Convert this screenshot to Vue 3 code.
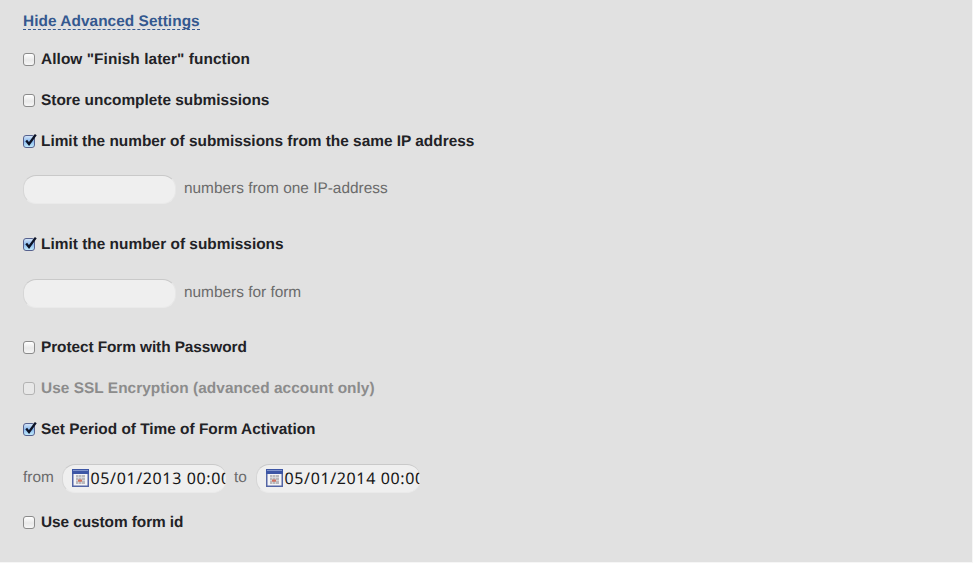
<template>
  <div class="settings-panel">
    <div class="panel-header">
      <a class="toggle-link">Hide Advanced Settings</a>
    </div>

    <template v-for="item in options" :key="item.id">
      <label class="option" :class="{ disabled: item.disabled }">
        <span class="checkbox" :class="{ checked: item.checked }" @click="toggle(item)">
          <svg v-if="item.checked" class="tick" width="15" height="16" viewBox="0 0 15 16">
            <path d="M3.2 7.6 L6 11 L12.8 1.6" fill="none" stroke="#0b1226" stroke-width="2.3" />
          </svg>
        </span>
        <span class="option-label" :style="{ letterSpacing: item.spacing + 'px' }">{{ item.label }}</span>
      </label>

      <div v-if="item.hint && item.checked" class="field-row" :class="item.id">
        <input v-model="item.value" class="field" type="text" />
        <span class="hint">{{ item.hint }}</span>
      </div>

      <div v-if="item.period && item.checked" class="period-row">
        <template v-for="date in item.period" :key="date.name">
          <span class="hint" :class="date.name">{{ date.name }}</span>
          <div class="date-field">
            <svg class="calendar" width="17" height="18" viewBox="0 0 17 18">
              <rect x="0.75" y="0.75" width="15.5" height="16.5" fill="#f4f4f6" stroke="#5365a5" stroke-width="1.5" />
              <rect x="0" y="0" width="17" height="5" fill="#3d56a5" />
              <rect x="1" y="1" width="15" height="1" fill="#8295cc" />
              <rect x="4" y="6" width="9" height="9" fill="#b9b9bd" />
              <path d="M4 8.5H13M4 11.5H13M6.5 6V15M9.5 6V15" stroke="#e0e0e2" stroke-width="0.7" />
              <rect x="6" y="10.5" width="4" height="2.2" fill="#d2705f" />
            </svg>
            <span class="date-value">{{ date.value }}</span>
          </div>
        </template>
      </div>
    </template>
  </div>
</template>

<script setup>
import { ref } from 'vue'

const options = ref([
  { id: 'later', label: 'Allow "Finish later" function', spacing: 0.07 },
  { id: 'store', label: 'Store uncomplete submissions', spacing: 0 },
  {
    id: 'ip',
    label: 'Limit the number of submissions from the same IP address',
    spacing: 0,
    checked: true,
    value: '',
    hint: 'numbers from one IP-address'
  },
  {
    id: 'limit',
    label: 'Limit the number of submissions',
    spacing: 0.02,
    checked: true,
    value: '',
    hint: 'numbers for form'
  },
  { id: 'password', label: 'Protect Form with Password', spacing: -0.08 },
  { id: 'ssl', label: 'Use SSL Encryption (advanced account only)', spacing: 0.05, disabled: true },
  {
    id: 'period',
    label: 'Set Period of Time of Form Activation',
    spacing: 0,
    checked: true,
    period: [
      { name: 'from', value: '05/01/2013 00:00' },
      { name: 'to', value: '05/01/2014 00:00' }
    ]
  },
  { id: 'custom', label: 'Use custom form id', spacing: -0.07 }
])

function toggle(item) {
  if (!item.disabled) {
    item.checked = !item.checked
  }
}
</script>

<style>
body {
  background: #f6f6f6;
}
</style>

<style scoped>
.settings-panel {
  box-sizing: border-box;
  width: 972px;
  height: 562px;
  padding-left: 23px;
  background: #e1e1e1;
  color: #222226;
  font-family: "Liberation Sans", Arial, sans-serif;
  font-size: 15.4px;
  text-rendering: geometricPrecision;
  overflow: hidden;
}

.panel-header {
  height: 39px;
  padding-top: 12px;
  box-sizing: border-box;
}

.toggle-link {
  display: inline-block;
  height: 17px;
  line-height: 19px;
  border-bottom: 1px dashed #34588f;
  color: #34588f;
  font-weight: bold;
  letter-spacing: 0.05px;
  white-space: nowrap;
}

.option {
  display: flex;
  align-items: center;
  height: 41px;
}

.checkbox {
  position: relative;
  box-sizing: border-box;
  width: 12px;
  height: 13px;
  margin-right: 6px;
  border: 1px solid #8b8b8b;
  border-radius: 3px;
  background: linear-gradient(#fff, #e9e9e9 55%, #f6f6f6);
}

.checkbox.checked {
  border-color: #56618e;
  background: linear-gradient(#d3e4f8, #89b9ed 50%, #c1eafc);
}

.tick {
  position: absolute;
  left: -1px;
  top: -3px;
}

.option-label {
  font-weight: bold;
  line-height: 18px;
  white-space: nowrap;
}

.disabled {
  color: #8c8c8c;
}

.disabled .checkbox {
  border-color: #b3b3b3;
  background: #e8e8e8;
}

.field-row {
  display: flex;
  align-items: flex-start;
  height: 62px;
  padding-top: 13px;
  box-sizing: border-box;
}

.field-row.limit {
  padding-top: 14px;
}

.field,
.date-field {
  box-sizing: border-box;
  height: 29px;
  border: 1px solid #d6d6d6;
  border-top-color: #c9c9c9;
  border-right-color: #e7e7e7;
  border-bottom-color: #eaeaea;
  border-radius: 13px;
  background: #efefef;
}

.field {
  width: 153px;
  margin: 0 8px 0 0;
  padding: 0 10px;
  outline: none;
}

.hint {
  color: #6b6b6b;
  line-height: 18px;
  white-space: nowrap;
}

.field-row .hint {
  padding-top: 5px;
}

.period-row {
  display: flex;
  align-items: center;
  height: 52px;
  padding-top: 4px;
  box-sizing: border-box;
}

.from {
  width: 39px;
}

.to {
  width: 22px;
  margin-left: 8px;
}

.date-field {
  display: flex;
  align-items: center;
  width: 164px;
  padding-left: 9px;
  border-right: none;
  overflow: hidden;
}

.calendar {
  flex: none;
  margin-right: 1.5px;
}

.date-value {
  color: #161616;
  font-family: "Noto Sans", sans-serif;
  font-size: 16px;
  letter-spacing: 0.63px;
  white-space: nowrap;
}
</style>
